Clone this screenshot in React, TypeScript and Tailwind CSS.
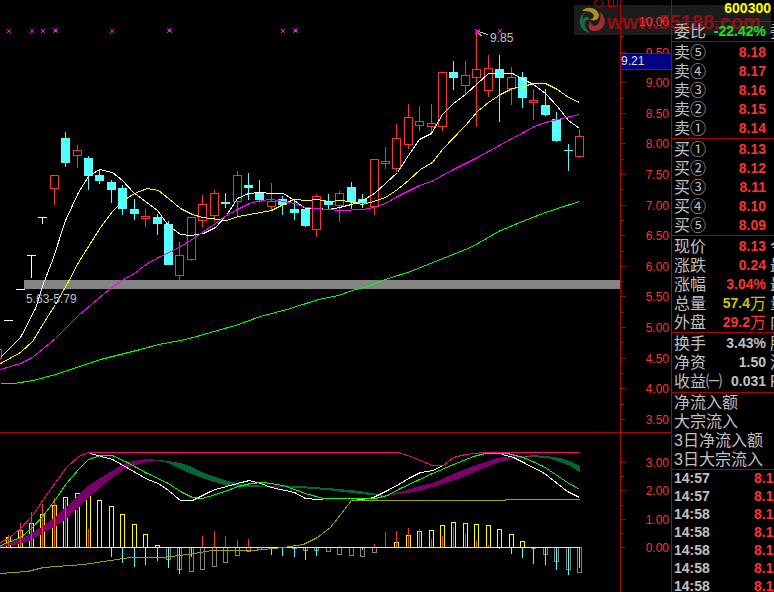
import React from "react";

type Candle = {
  x: number;
  up: boolean;
  top: number;
  bottom: number;
  high: number;
  low: number;
};

const c = (x: number, up: boolean, top: number, bottom: number, high: number, low: number): Candle => ({
  x, up, top, bottom, high, low,
});

const candles: Candle[] = [
  c(-3, true, 349, 358, 349, 358),
  c(54, true, 175, 188, 175, 205),
  c(65, false, 138, 163, 132, 167),
  c(77, true, 150, 155, 145, 168),
  c(88, false, 158, 176, 156, 190),
  c(99, false, 175, 181, 169, 184),
  c(111, false, 182, 190, 180, 203),
  c(122, false, 188, 209, 185, 215),
  c(134, false, 209, 214, 199, 220),
  c(145, true, 216, 218, 209, 227),
  c(157, false, 217, 224, 214, 235),
  c(168, false, 224, 265, 221, 265),
  c(179, true, 255, 275, 242, 280),
  c(191, true, 217, 259, 217, 261),
  c(202, true, 204, 220, 195, 227),
  c(214, true, 193, 215, 190, 222),
  c(225, false, 202, 204, 193, 208),
  c(237, true, 175, 201, 171, 216),
  c(248, false, 185, 188, 173, 200),
  c(259, false, 192, 200, 180, 202),
  c(271, true, 201, 206, 183, 210),
  c(282, false, 199, 205, 196, 215),
  c(294, false, 209, 213, 200, 220),
  c(305, false, 209, 226, 209, 227),
  c(316, true, 196, 229, 194, 237),
  c(328, false, 201, 205, 194, 209),
  c(339, true, 193, 205, 191, 222),
  c(351, false, 187, 202, 182, 209),
  c(362, false, 199, 203, 194, 208),
  c(374, true, 159, 206, 159, 215),
  c(385, true, 161, 163, 147, 169),
  c(396, true, 138, 168, 124, 172),
  c(408, true, 117, 144, 104, 149),
  c(419, true, 121, 125, 106, 131),
  c(431, true, 123, 126, 104, 135),
  c(442, true, 72, 126, 72, 131),
  c(453, false, 72, 78, 61, 90),
  c(465, true, 75, 85, 61, 94),
  c(476, true, 69, 77, 32, 127),
  c(488, true, 68, 90, 55, 97),
  c(499, false, 69, 78, 55, 122),
  c(511, true, 77, 88, 67, 105),
  c(522, false, 77, 98, 72, 108),
  c(533, true, 100, 102, 89, 120),
  c(545, false, 105, 115, 89, 116),
  c(556, false, 119, 141, 112, 142),
  c(568, false, 150, 151, 144, 171),
  c(579, true, 136, 156, 129, 158),
];

const ma5 =
  "0,357 20,337 35,308 43,283 52,260 65,220 78,192 88,176 99,169 112,172 122,180 133,192 157,210 168,225 180,234 191,235 203,233 215,227 226,215 237,198 248,193 260,192 271,193 283,193 294,200 305,208 316,208 328,209 339,207 351,204 362,200 374,193 385,183 397,172 408,155 419,139 431,133 442,114 453,103 465,94 477,83 488,73 499,73 512,73 523,79 533,84 545,93 557,106 568,120 579,128";
const ma10 =
  "0,363 20,352 32,341 43,323 55,304 67,283 78,262 100,227 112,211 123,200 134,193 147,188 158,190 168,198 180,208 192,214 202,217 210,218 226,220 238,216 260,212 271,210 283,204 293,199 307,200 317,199 328,201 342,200 362,204 373,201 385,197 397,189 408,180 420,169 432,162 442,149 465,125 477,111 488,102 500,94 512,88 523,86 533,83 545,83 557,89 568,97 579,102";
const ma20 =
  "0,369 20,363 32,357 55,338 78,315 110,288 123,279 134,273 147,263 158,257 173,250 187,242 202,232 215,223 226,215 237,209 249,203 260,200 271,199 283,201 294,203 305,207 327,209 340,210 363,209 373,207 385,203 397,196 419,185 431,181 453,169 477,157 499,145 523,132 534,126 545,122 557,119 579,114";
const ma60 =
  "0,383 13,383 33,380 55,374 67,370 100,359 140,349 158,344 180,340 193,337 210,332 235,325 260,316 290,308 318,299 338,295 352,290 367,286 385,279 410,271 440,259 470,247 500,230 527,219 545,212 557,208 579,201";

const markers: [number, number, boolean][] = [
  [9, 31, false], [32, 31, false], [43, 31, false], [55, 30, true], [112, 31, false],
  [169, 30, true], [283, 31, false], [295, 30, true], [477, 31, true], [500, 31, false],
];

const yellowBars: [number, number][] = [
  [8, 537], [20, 530], [31, 523], [42, 514], [54, 505], [65, 497], [77, 493], [88, 494], [99, 500],
  [111, 506], [122, 514], [134, 524], [145, 534], [157, 545], [396, 542], [408, 535], [419, 531],
  [431, 530], [442, 525], [453, 522], [465, 523], [476, 524], [488, 525], [499, 529], [511, 534], [522, 541],
];
const greyBars: [number, number][] = [
  [168, 559], [179, 569], [191, 571], [202, 569], [214, 566], [225, 562], [237, 555], [248, 551], [259, 549],
  [294, 548], [305, 550], [316, 550], [328, 551], [339, 554], [351, 555], [362, 556], [374, 552],
  [533, 548], [545, 554], [556, 561], [568, 569], [579, 572],
];
const redSpikes: [number, number][] = [
  [8, 535], [20, 523], [31, 512], [42, 504], [54, 498], [65, 499], [77, 510], [88, 529], [202, 536],
  [214, 531], [225, 536], [237, 540], [248, 539], [339, 546], [374, 544], [385, 532], [396, 531],
  [408, 528], [419, 529], [431, 539], [442, 536], [453, 527], [465, 534], [476, 541], [488, 545],
];
const cyanSpikes: [number, number][] = [
  [111, 557], [122, 563], [134, 567], [145, 565], [157, 561], [168, 568], [179, 574], [191, 557],
  [271, 555], [282, 556], [294, 557], [305, 560], [316, 556], [362, 550], [499, 549], [511, 554],
  [522, 558], [533, 564], [545, 565], [556, 570], [568, 575], [579, 568],
];

function Line({ points, color }: { points: string; color: string }) {
  return <polyline points={points} fill="none" stroke={color} strokeWidth="1" transform="translate(0.5 0.5)" />;
}

function PriceChart() {
  return (
    <svg className="block h-[432px] w-full" viewBox="0 0 620 432" preserveAspectRatio="none" shapeRendering="crispEdges">
      <path d="M599 -2l5 5l-5 5l-5 -5z M608.5 -2v8h9v-8 M613.5 -2v8" fill="none" stroke="#b00000" />
      <rect x="24" y="280" width="596" height="9" fill="#848484" />
      {candles.map((k) => (
        <g key={k.x} fill={k.up ? "#ff3232" : "#54ffff"}>
          {k.up ? (
            <>
              <rect x={k.x} y={k.high} width="1" height={k.top - k.high} />
              <rect x={k.x} y={k.bottom} width="1" height={k.low - k.bottom} />
              <rect x={k.x - 3.5} y={k.top + 0.5} width="8" height={k.bottom - k.top} fill="none" stroke="#ff3232" />
            </>
          ) : (
            <>
              <rect x={k.x} y={k.high} width="1" height={k.low - k.high} />
              <rect x={k.x - 4} y={k.top} width="9" height={k.bottom - k.top} />
            </>
          )}
        </g>
      ))}
      <g fill="#ffffff">
        <rect x="38" y="217" width="9" height="1" />
        <rect x="42" y="217" width="1" height="7" />
        <rect x="27" y="255" width="9" height="1" />
        <rect x="31" y="255" width="1" height="23" />
        <rect x="16" y="289" width="9" height="1" />
        <rect x="4" y="320" width="9" height="1" />
      </g>
      <Line points={ma5} color="#ffffff" />
      <Line points={ma10} color="#ffff00" />
      <Line points={ma20} color="#ff00ff" />
      <Line points={ma60} color="#00ff00" />
      <path d="M478 31.5L488 34.5 M478 33l4 3" stroke="#c0c0c0" fill="none" />
      {markers.map(([x, y, bold]) => (
        <g key={x} fill="#ff00ff">
          {bold ? (
            <rect x={x - 1} y={y - 1} width="3" height="3" />
          ) : (
            <rect x={x - 1} y={y - 1} width="2" height="2" />
          )}
          <rect x={x - 2} y={y - 2} width="1" height="1" />
          <rect x={bold ? x + 2 : x + 1} y={y - 2} width="1" height="1" />
          <rect x={x - 2} y={bold ? y + 2 : y + 1} width="1" height="1" />
          <rect x={bold ? x + 2 : x + 1} y={bold ? y + 2 : y + 1} width="1" height="1" />
        </g>
      ))}
      <g fill="#c0c0c0" className="font-['Liberation_Sans',sans-serif] text-xs">
        <text x="26" y="303">5.63-5.79</text>
        <text x="490" y="42">9.85</text>
      </g>
    </svg>
  );
}

function IndicatorChart() {
  return (
    <svg className="block h-[159px] w-full" viewBox="0 433 620 159" preserveAspectRatio="none" shapeRendering="crispEdges">
      {yellowBars.map(([x, y]) => (
        <rect key={x} x={x - 1.5} y={y + 0.5} width="4" height={547 - y} fill="none" stroke="#ffff00" />
      ))}
      {greyBars.map(([x, y]) => (
        <rect key={x} x={x - 1.5} y="547.5" width="4" height={y - 547} fill="none" stroke="#848484" />
      ))}
      <polygon
        fill="#780068"
        points="0,545 20,539 32,533 43,526 55,517 66,507 78,495 88,486 100,478 112,471 123,464 133,461 147,459 158,460 158,461 147,462 133,466 123,470 112,478 100,488 88,498 78,508 66,519 55,527 43,533 32,540 20,544 0,547"
      />
      <polygon
        fill="#006838"
        points="158,460 168,461 180,463 192,467 202,472 215,477 227,481 238,483 245,485 273,486 300,486 327,488 360,491 383,495 383,496 360,494 327,490 300,488 273,487 245,487 227,486 215,482 202,478 192,474 180,469 168,463 158,461"
      />
      <polygon
        fill="#780068"
        points="385,495 400,492 420,486 433,483 453,474 473,466 497,458 513,456 528,456 528,457 513,459 497,463 475,472 453,481 433,487 420,491 400,494 385,496"
      />
      <polygon
        fill="#006838"
        points="530,455 547,456 560,458 570,461 580,466 580,472 570,466 560,462 547,458 530,457"
      />
      <rect x="271" y="486" width="10" height="1" fill="#780068" />
      <rect x="525" y="456" width="3" height="1" fill="#00a0a0" />
      <rect x="528" y="456" width="3" height="1" fill="#ff0000" />
      {redSpikes.map(([x, y]) => (
        <rect key={x} x={x} y={y} width="1" height={547 - y} fill="#ff3232" />
      ))}
      {cyanSpikes.map(([x, y]) => (
        <rect key={x} x={x} y="548" width="1" height={y - 548} fill="#54ffff" />
      ))}
      <Line
        color="#ffffff"
        points="90,453 112,459 135,472 147,479 158,483 168,490 180,500 192,500 210,491 215,489 237,483 249,480 260,483 271,487 294,492 305,498 317,499 328,498 350,498 362,499 373,497 387,490 400,483 408,478 420,472 433,470 442,465"
      />
      <Line color="#ffffff" points="502,454 513,457 523,462 544,473 567,491 579,497" />
      <Line
        color="#00ff00"
        points="0,545 20,537 32,527 43,515 55,499 66,483 78,469 88,459 100,455 112,455 127,462 145,472 168,483 180,491 192,497 202,498 215,494 227,490 238,486 250,483 263,482 283,485 305,493 323,498 375,498 387,495 400,488 432,473 453,464 473,456 485,453 507,453 523,457 543,466 567,482 579,489"
      />
      <Line
        color="#ff0078"
        points="0,542 8,538 20,528 32,515 43,499 55,482 66,467 78,456 88,452 398,452 410,456 420,460 432,465 443,465 453,457 465,454 483,452 579,452"
      />
      <rect x="0" y="547" width="580" height="1" fill="#ffff00" />
      <Line
        color="#a0a000"
        points="0,573 13,572 27,571 43,567 83,564 130,557 163,557 187,554 200,552 212,550 253,550 283,547 303,544 317,537 330,527 351,500 505,500 505,499 579,499"
      />
    </svg>
  );
}

const priceLabels = ["10.00", "9.50", "9.00", "8.50", "8.00", "7.50", "7.00", "6.50", "6.00", "5.50", "5.00", "4.50", "4.00", "3.50"];
const indicatorLabels = ["3.00", "2.00", "1.00", "0.00"];

function Ticks({ className, start, step, count, height }: { className: string; start: number; step: number; count: number; height: number }) {
  const marks = Array.from({ length: (count - 1) * 4 + 1 }, (_, i) => ({
    y: Math.round(start + (i * step) / 4),
    w: i % 4 === 0 ? 5 : i % 4 === 2 ? 3 : 1,
  }));
  return (
    <svg className={className} viewBox={`0 0 6 ${height}`} shapeRendering="crispEdges">
      {marks.map((m) => (
        <rect key={m.y} x="0" y={m.y} width={m.w} height="1" fill="#b00000" />
      ))}
    </svg>
  );
}

function AxisLabels({ labels, className }: { labels: string[]; className: string }) {
  return (
    <div className={`flex flex-1 flex-col justify-between pr-0.5 text-right text-xs leading-4 text-[#ff3232] ${className}`}>
      {labels.map((l) => (
        <span key={l}>{l}</span>
      ))}
    </div>
  );
}

type Row = { label: string; value?: string; unit?: string; color?: string; next?: string };

const red = "text-[#ff3232]";
const grey = "text-[#c0c0c0]";

const sections: Row[][] = [
  [{ label: "委比", value: "-22.42%", color: "text-[#20e020]", next: "委" }],
  [
    { label: "卖⑤", value: "8.18", color: red },
    { label: "卖④", value: "8.17", color: red },
    { label: "卖③", value: "8.16", color: red },
    { label: "卖②", value: "8.15", color: red },
    { label: "卖①", value: "8.14", color: red },
  ],
  [
    { label: "买①", value: "8.13", color: red },
    { label: "买②", value: "8.12", color: red },
    { label: "买③", value: "8.11", color: red },
    { label: "买④", value: "8.10", color: red },
    { label: "买⑤", value: "8.09", color: red },
  ],
  [
    { label: "现价", value: "8.13", color: red, next: "今" },
    { label: "涨跌", value: "0.24", color: red, next: "最" },
    { label: "涨幅", value: "3.04%", color: red, next: "最" },
    { label: "总量", value: "57.4", unit: "万", color: "text-[#c8c800]", next: "量" },
    { label: "外盘", value: "29.2", unit: "万", color: red, next: "内" },
  ],
  [
    { label: "换手", value: "3.43%", color: grey, next: "股" },
    { label: "净资", value: "1.50", color: grey, next: "流" },
    { label: "收益㈠", value: "0.031", color: grey, next: "P" },
  ],
  [{ label: "净流入额" }, { label: "大宗流入" }, { label: "3日净流入额" }, { label: "3日大宗流入" }],
];

const sectionPadding = ["", "pt-px", "pt-px", "pt-px", "py-px", ""];

const trades = ["14:57", "14:57", "14:58", "14:58", "14:58", "14:58", "14:58"];

function QuoteRow({ label, value, unit, color, next }: Row) {
  return (
    <div className="flex h-[19px] items-center gap-1 overflow-hidden pl-0.5 whitespace-nowrap">
      <span className="shrink-0 text-base leading-[19px] text-[#c0c0c0]">{label}</span>
      {value && (
        <>
          <span className={`flex flex-1 items-center justify-end text-sm leading-[19px] ${color}`}>
            <b>{value}</b>
            {unit && <span className="text-base leading-[19px]">{unit}</span>}
          </span>
          <span className="w-1 shrink-0 overflow-hidden text-base leading-[19px] text-[#c0c0c0]">{next}</span>
        </>
      )}
    </div>
  );
}

function QuotePanel() {
  return (
    <aside className="relative w-[103px] shrink-0 overflow-hidden border-l border-[#b00000]">
      <header className="h-[21px] pr-[3px] text-right text-sm leading-4 font-bold text-[#ffff00]">600300</header>
      {sections.map((rows, i) => (
        <section key={i} className={`border-t border-[#b00000] ${sectionPadding[i]}`}>
          {rows.map((r) => (
            <QuoteRow key={r.label} {...r} />
          ))}
        </section>
      ))}
      <section className="border-t border-[#b00000]">
        {trades.map((t, i) => (
          <div key={i} className="flex h-[18px] items-start justify-between overflow-hidden pl-0.5 text-sm leading-4 font-bold whitespace-nowrap">
            <span className="text-[#c0c0c0]">{t}</span>
            <span className="w-5 overflow-hidden text-[#ff3232]">8.13</span>
          </div>
        ))}
      </section>
    </aside>
  );
}

function Watermark() {
  return (
    <div className="absolute top-[5px] right-[3px] flex h-[30px] w-[197px] items-center gap-px bg-[#505050]/35 pl-1">
      <svg className="h-7 w-7 shrink-0 opacity-80" viewBox="0 0 28 28" fill="none">
        <path d="M4 5C9 -1 20 2 21 9C21 14 16 16 12 13C16 13 17 9 14 7C11 5 8 5 4 5z" fill="#c8b020" />
        <path d="M8 6C-1 10 -1 24 12 27C8 23 6 20 7 17C8 13 11 13 12 15C12 11 8 9 5 13C4 10 6 8 8 6z" fill="#108050" />
        <path d="M22 6C30 12 28 26 15 25C10 24 9 18 13 15C12 19 16 21 19 19C22 16 23 11 22 6z" fill="#c83030" />
      </svg>
      <span className="pt-1 text-xl leading-none font-bold text-[#b00c14]/80">www.55188.com</span>
    </div>
  );
}

export default function App() {
  return (
    <div className="relative flex h-screen w-full overflow-hidden bg-black font-['Liberation_Sans','Noto_Sans_CJK_SC',sans-serif]">
      <Watermark />
      <main className="relative min-w-0 flex-1">
        <div className="flex border-b border-[#b00000]">
          <div className="min-w-0 flex-1">
            <PriceChart />
          </div>
          <div className="relative flex h-[432px] w-[51px] border-l border-[#b00000]">
            <Ticks className="h-[432px] w-1.5" start={21} step={30.6} count={14} height={432} />
            <AxisLabels labels={priceLabels} className="pt-3.5 pb-1" />
            <div className="absolute inset-x-0 top-[53px] h-[17px] border-y border-[#b00000] bg-[#000084] text-xs leading-[15px] text-[#e0e0e0]">
              9.21
            </div>
          </div>
        </div>
        <div className="flex">
          <div className="min-w-0 flex-1">
            <IndicatorChart />
          </div>
          <div className="flex h-[159px] w-[51px] border-l border-[#b00000]">
            <Ticks className="h-[159px] w-1.5" start={29} step={28.4} count={4} height={159} />
            <AxisLabels labels={indicatorLabels} className="pt-[22px] pb-9" />
          </div>
        </div>
      </main>
      <QuotePanel />
    </div>
  );
}
